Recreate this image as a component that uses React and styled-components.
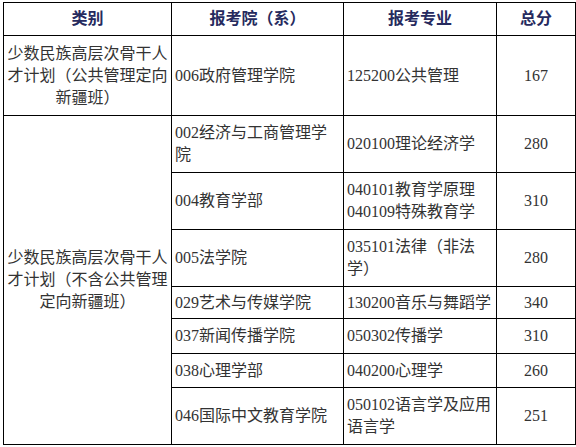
import React from 'react';
import styled, { createGlobalStyle } from 'styled-components';

const GlobalStyle = createGlobalStyle`
  html, body {
    margin: 0;
    padding: 0;
    background: #ffffff;
  }
  body {
    font-family: "Liberation Serif", "Noto Sans CJK SC", serif;
  }
`;

const Page = styled.div`
  padding: 2px 0 0 3px;
`;

const Table = styled.table`
  border-collapse: collapse;
  table-layout: fixed;
  width: 572px;
  font-size: 16px;
  line-height: 22px;
  color: #333333;
`;

const Row = styled.tr`
  height: ${({ $h }) => $h}px;
`;

const HeadCell = styled.th`
  border: 1px solid #000000;
  padding: 0;
  text-align: center;
  vertical-align: middle;
  font-weight: bold;
  color: #262a5e;
`;

const Cell = styled.td`
  border: 1px solid #000000;
  padding: 0 ${({ $align }) => ($align === 'center' ? '2px' : '3px')};
  text-align: ${({ $align }) => $align || 'left'};
  vertical-align: middle;
  word-break: break-all;
`;

const widths = [168, 172, 153, 79];

const groupTwo = [
  { h: 57, dept: '002经济与工商管理学院', major: '020100理论经济学', score: 280 },
  { h: 57, dept: '004教育学部', major: ['040101教育学原理', '040109特殊教育学'], score: 310 },
  { h: 57, dept: '005法学院', major: '035101法律（非法学）', score: 280 },
  { h: 32, dept: '029艺术与传媒学院', major: '130200音乐与舞蹈学', score: 340 },
  { h: 35, dept: '037新闻传播学院', major: '050302传播学', score: 310 },
  { h: 34, dept: '038心理学部', major: '040200心理学', score: 260 },
  { h: 57, dept: '046国际中文教育学院', major: '050102语言学及应用语言学', score: 251 },
];

const Major = ({ value }) =>
  Array.isArray(value)
    ? value.map((line, i) => (
        <React.Fragment key={line}>
          {i > 0 && <br />}
          {line}
        </React.Fragment>
      ))
    : value;

export default function App() {
  return (
    <Page>
      <GlobalStyle />
      <Table>
        <colgroup>
          {widths.map((w) => (
            <col key={w} style={{ width: w }} />
          ))}
        </colgroup>
        <thead>
          <Row $h={33}>
            <HeadCell>类别</HeadCell>
            <HeadCell>报考院（系）</HeadCell>
            <HeadCell>报考专业</HeadCell>
            <HeadCell>总分</HeadCell>
          </Row>
        </thead>
        <tbody>
          <Row $h={80}>
            <Cell $align="center">少数民族高层次骨干人才计划（公共管理定向新疆班）</Cell>
            <Cell>006政府管理学院</Cell>
            <Cell>125200公共管理</Cell>
            <Cell $align="center">167</Cell>
          </Row>
          {groupTwo.map((r, i) => (
            <Row key={r.dept} $h={r.h}>
              {i === 0 && (
                <Cell $align="center" rowSpan={groupTwo.length}>
                  少数民族高层次骨干人才计划（不含公共管理定向新疆班）
                </Cell>
              )}
              <Cell>{r.dept}</Cell>
              <Cell>
                <Major value={r.major} />
              </Cell>
              <Cell $align="center">{r.score}</Cell>
            </Row>
          ))}
        </tbody>
      </Table>
    </Page>
  );
}
